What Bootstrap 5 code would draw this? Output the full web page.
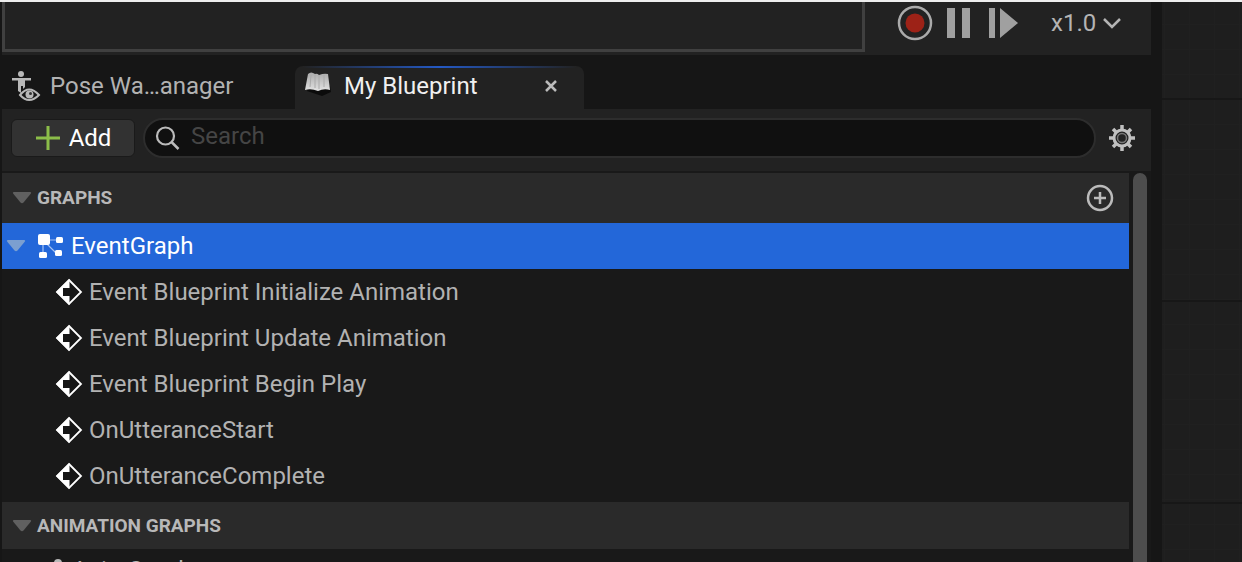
<!DOCTYPE html>
<html lang="en" data-bs-theme="dark">
<head>
<meta charset="utf-8">
<meta name="viewport" content="width=device-width, initial-scale=1">
<title>My Blueprint</title>
<link rel="stylesheet" href="https://cdn.jsdelivr.net/npm/bootstrap@5.3.0/dist/css/bootstrap.min.css">
<style>
:root { --panel:#222; --dock:#161616; --text:#b2b2b2; --bright:#f0f0f0; }
body { font-family:Roboto,"Liberation Sans",sans-serif; font-size:24px; line-height:28px; color:var(--text); background:var(--dock); border-top:2px solid #eee; }
svg { display:block; flex:none; }
.dock { padding-left:2px; }
.transport { background:var(--panel); height:53px; padding-right:28px; }
.track { border:3px solid #404040; border-top:0; height:50px; margin-right:32px; }
.transport .btn, .tool { color:#a0a0a0; border:0; padding:0; font-size:inherit; line-height:inherit; background:none; }
.transport .controls { height:42px; }
.rate { appearance:none; border:0; background:none; color:#b4b4b4; padding:0 26px 0 0; margin-right:-22px; line-height:32px; height:40px; }
.rate + svg { pointer-events:none; }
.tabs { height:54px; padding-top:11px; }
.tab-link { color:var(--text); text-decoration:none; }
.tab-idle { width:293px; padding:0 0 4px 8px; }
.tab-open { width:289px; background:var(--panel); border-radius:8px 8px 0 0; color:var(--bright); position:relative; padding:0 24px 4px 7px; }
.tab-open::before { content:""; position:absolute; left:8px; right:8px; top:0; height:2px; background:linear-gradient(90deg,transparent,#2459c4 50%,transparent); }
.toolbar { background:var(--panel); height:62px; padding:0 15px 4px 9px; }
.add-btn { background:#323232; color:#fff; border:1px solid #1a1a1a; border-radius:6px; width:124px; height:38px; padding:0; font-size:24px; line-height:28px; }
.search-box { background:#101010; border:2px solid #2d2d2d; border-radius:20px; height:40px; padding:0 10px; }
.search-box input { background:none; border:0; outline:0; color:#ccc; padding:0 0 4px; min-width:0; }
.search-box input::placeholder { color:#454545; opacity:1; }
.outline { padding-top:2px; background:#191919; }
.section-head { background:#2a2a2a; height:50px; padding:0 15px 0 10px; gap:5px; }
.section-head h2 { font-size:19px; line-height:24px; font-weight:700; margin:0; color:#b8b8b8; }
.section-head.next { height:47px; margin-top:3px; }
.tree-row { height:46px; color:var(--text); text-decoration:none; padding-left:53px; gap:6px; }
.tree-row.current { background:#2367d9; color:#fff; padding-left:4px; gap:8px; }
.tree-row.anim { height:42px; padding-left:44px; gap:2px; }
.thumb { width:14px; background:#4d4d4d; border-radius:7px 7px 0 0; margin:0 4px; }
.canvas { flex:0 0 80px; margin-left:11px; background-color:#1e1e1e;
 background-image:linear-gradient(#171717 2px,transparent 2px),linear-gradient(#202020 1px,transparent 1px),linear-gradient(90deg,#202020 1px,transparent 1px);
 background-size:100% 202px,100% 25px,25px 100%; background-position:0 96px,0 22px,2px 0; }
</style>
</head>
<body class="vh-100 overflow-hidden d-flex">
<svg class="d-none" aria-hidden="true">
  <symbol id="event" viewBox="0 0 28 28"><path d="M14 2 26 14 14 26 2 14Z" fill="#161616" stroke="#fff" stroke-width="1.800"/><path d="M14.500 1 1 14 14.500 27V18H8V10H14.500Z" fill="#fff"/></symbol>
  <symbol id="caret" viewBox="0 0 20 14"><path d="M2 1H18Q20 1 18.500 3L11.500 11.500Q10 13 8.500 11.500L1.500 3Q0 1 2 1Z" fill="currentColor"/></symbol>
</svg>
<main class="dock flex-grow-1 d-flex flex-column overflow-hidden">
  <div class="transport d-flex flex-shrink-0">
    <div class="track flex-grow-1"></div>
    <div class="controls d-flex align-items-center">
      <button class="btn" aria-label="Record"><svg width="36" height="36" viewBox="0 0 36 36"><circle cx="18" cy="18" r="16" fill="none" stroke="#aaa" stroke-width="2.500"/><circle cx="18" cy="18" r="9.500" fill="#9d2217"/></svg></button>
      <button class="btn ms-2 ps-1 me-3" aria-label="Pause"><svg width="26" height="30" viewBox="0 0 26 30"><path d="M2 0h8v30H2ZM17 0h8v30h-8Z" fill="currentColor"/></svg></button>
      <button class="btn me-4" aria-label="Step"><svg width="32" height="30" viewBox="0 0 32 30"><path d="M2 0h6v30H2ZM13 0 31 15 13 30Z" fill="currentColor"/></svg></button>
      <label class="d-flex align-items-center ms-2"><span class="visually-hidden">Speed</span><select class="rate"><option>x1.0</option></select><svg width="22" height="16" viewBox="0 0 22 16"><path d="m3 4 8 8 8-8" fill="none" stroke="#b4b4b4" stroke-width="2.500"/></svg></label>
    </div>
  </div>
  <nav class="tabs d-flex flex-shrink-0" aria-label="Panels">
    <a href="#" class="tab-link tab-idle d-flex align-items-center gap-2"><svg width="32" height="32" viewBox="0 0 32 32"><g fill="#b8b8b8"><circle cx="11" cy="4" r="3"/><path d="M2 8H21V10.500H15V17L13 19V16H11V23L8 21V10.500H2Z"/></g><path d="M10 25Q19 14 29 25 19 35 10 25Z" fill="#161616" stroke="#b8b8b8" stroke-width="2"/><circle cx="19.500" cy="24.500" r="4" fill="#b8b8b8"/><circle cx="20.500" cy="23.500" r="1.500" fill="#333"/></svg><span>Pose Wa…anager</span></a>
    <div class="tab-open d-flex align-items-center">
      <svg class="me-2" width="34" height="32" viewBox="0 0 34 32"><defs><linearGradient id="book" x2="0" y2="1"><stop stop-color="#aaa"/><stop offset="1" stop-color="#e2e2e2"/></linearGradient></defs><path d="M5 21 14 24 20 26 29 22 28 16 6 19Z" fill="#0b0b0b"/><path d="M6 4Q9 1 13 4 15 3 17 5 22 3 26 4L28 20Q22 18 16 21 9 18 3 20Z" fill="url(#book)"/><path d="M9 5 8 17M13 4V18M17 5V19M22 5V17" stroke="#aaa" fill="none"/></svg>
      <a href="#" class="tab-link text-reset flex-grow-1" aria-current="page">My Blueprint</a>
      <button class="tool" aria-label="Close tab"><svg width="18" height="18" viewBox="0 0 18 18"><path d="m4 4 10 10M14 4 4 14" stroke="#bbb" stroke-width="2.500"/></svg></button>
    </div>
  </nav>
  <div class="toolbar d-flex align-items-center flex-shrink-0">
    <button class="btn add-btn d-flex align-items-center justify-content-center gap-2"><svg width="26" height="26" viewBox="0 0 26 26"><path d="M13 1V25M1 13H25" stroke="#8bbd49" stroke-width="3"/></svg>Add</button>
    <label class="search-box d-flex align-items-center flex-grow-1 ms-2"><svg class="me-2" width="28" height="26" viewBox="0 0 28 26"><circle cx="10.500" cy="11" r="8.500" fill="none" stroke="#bbb" stroke-width="2.200"/><path d="m16.500 17 7 7" stroke="#bbb" stroke-width="2.500"/></svg><input class="flex-grow-1" type="text" placeholder="Search" aria-label="Search"></label>
    <button class="tool ms-2 ps-1" aria-label="Settings"><svg width="28" height="28" viewBox="-14 -14 28 28"><g stroke="#c0c0c0" fill="none"><path d="M0-8V-13M0 8V13M-8 0H-13M8 0H13M-6-6-9-9M6-6 9-9M-6 6-9 9M6 6 9 9" stroke-width="3.500"/><circle r="8" stroke-width="3"/><circle r="4.500" stroke="#777" stroke-width="1.500"/></g></svg></button>
  </div>
  <div class="outline d-flex flex-grow-1 overflow-hidden">
    <div class="flex-grow-1">
      <div class="section-head d-flex align-items-center"><svg width="20" height="14" color="#606060"><use href="#caret"/></svg><h2 class="flex-grow-1">GRAPHS</h2><button class="tool" aria-label="Add graph"><svg width="28" height="28" viewBox="0 0 28 28"><path d="M14 8V20M8 14H20" stroke="#bbb" stroke-width="2.500"/><circle cx="14" cy="14" r="12" fill="none" stroke="#bbb" stroke-width="2.500"/></svg></button></div>
      <a href="#" class="tree-row current d-flex align-items-center"><svg width="20" height="14" color="#7b9fd0"><use href="#caret"/></svg><svg width="29" height="28" viewBox="0 0 29 28"><path d="M10 8H24M9 8V23M9 8 23 22" stroke="#a5c2f3" stroke-width="1.200"/><g fill="#fff"><rect x="4" y="2" width="12" height="11" rx="2"/><rect x="22" y="5" width="7" height="6" rx="1.500"/><rect x="5" y="20" width="8" height="6" rx="1.500"/><rect x="21" y="18" width="7" height="6" rx="1.500"/></g></svg><span>EventGraph</span></a>
      <a href="#" class="tree-row d-flex align-items-center"><svg width="28" height="28"><use href="#event"/></svg>Event Blueprint Initialize Animation</a>
      <a href="#" class="tree-row d-flex align-items-center"><svg width="28" height="28"><use href="#event"/></svg>Event Blueprint Update Animation</a>
      <a href="#" class="tree-row d-flex align-items-center"><svg width="28" height="28"><use href="#event"/></svg>Event Blueprint Begin Play</a>
      <a href="#" class="tree-row d-flex align-items-center"><svg width="28" height="28"><use href="#event"/></svg>OnUtteranceStart</a>
      <a href="#" class="tree-row d-flex align-items-center"><svg width="28" height="28"><use href="#event"/></svg>OnUtteranceComplete</a>
      <div class="section-head next d-flex align-items-center"><svg width="20" height="14" color="#606060"><use href="#caret"/></svg><h2>ANIMATION GRAPHS</h2></div>
      <a href="#" class="tree-row anim d-flex align-items-center"><svg width="24" height="22" viewBox="0 0 24 22"><circle cx="12" cy="4" r="4" fill="#b8b8b8"/><path d="M2 9H22V12H17V22H13V17H11V22H7V12H2Z" fill="#b8b8b8"/></svg>AnimGraph</a>
    </div>
    <div class="thumb"></div>
  </div>
</main>
<aside class="canvas" aria-label="Graph canvas"></aside>
<script src="https://cdn.jsdelivr.net/npm/bootstrap@5.3.0/dist/js/bootstrap.bundle.min.js"></script>
</body>
</html>
